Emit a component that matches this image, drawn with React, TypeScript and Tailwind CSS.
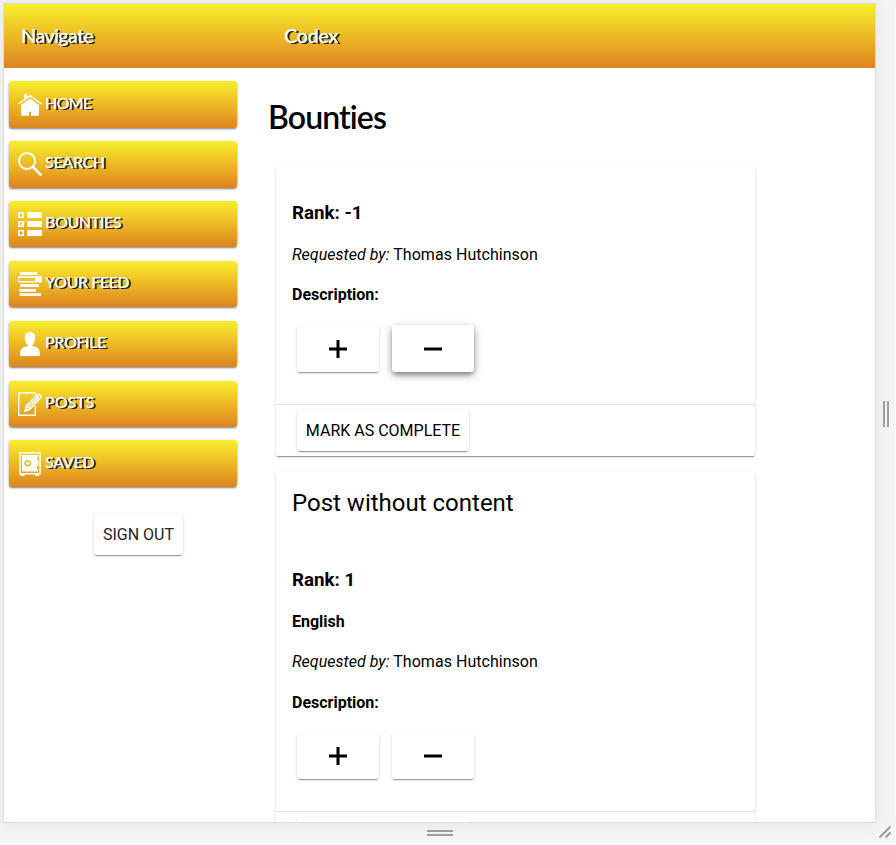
import React from "react";

const Home = () => (
  <svg width="24" height="24" viewBox="0 -1.7 24 24" fill="#fff">
    <path d="M6 .3h3v3L6 5.500z" />
    <path d="M0 9.700 12 1l12 8.700-.9 1.200L12 3 .9 10.900z" />
    <path d="M3 11.300 12 4.800l9 6.500V22h-8v-4h-2v4H3z" />
  </svg>
);
const Search = () => (
  <svg width="24" height="24" viewBox="0 0 24 24" fill="none" stroke="#fff">
    <circle cx="9" cy="9" r="8" strokeWidth="2" />
    <path d="m15 15 7.7 7.7" strokeWidth="2.6" strokeLinecap="round" />
  </svg>
);
const List = () => (
  <svg width="24" height="24" viewBox="0 0 24 24" fill="#fff">
    <path d="M9 0h15v6H9zM9 9h15v6H9zM9 18h15v6H9z" />
    <path d="M.75.75h4.5v4.5H.75zM.75 10h4.5v4.25H.75zM.75 18.75h4.5v4.5H.75z" fill="none" stroke="#fff" strokeWidth="1.5" />
    <path d="m2 11.5 1.5 1.5L7.5 8.5" fill="none" stroke="#fff" />
  </svg>
);
const Feed = () => (
  <svg width="24" height="24" viewBox="0 0 24 24" fill="#fff">
    <path d="M2 0h17.5v3H2zM2 12h19v3H2zM1 17h17v2.7H1zM1.5 21.2H23V24H1.5z" />
    <path fillRule="evenodd" d="M0 4.3h24v6.2H0zM1 6v3h16V6z" />
  </svg>
);
const Profile = () => (
  <svg width="24" height="24" viewBox="0 0 24 24" fill="#fff">
    <path d="M12 0c-3.5 0-5.3 2.2-5.3 5.6 0 2.8 1 5.8 2.8 7.3.3 1-.4 1.5-1.8 1.8C4.300 15.300 2 16.200 2 24h20c0-7.800-2.300-8.700-5.700-9.300-1.400-.3-2.100-.8-1.800-1.800 1.800-1.500 2.800-4.500 2.800-7.300C17.300 2.200 15.500 0 12 0z" />
  </svg>
);
const Posts = () => (
  <svg width="24" height="24" viewBox="0 0 24 24" fill="none" stroke="#fff">
    <path d="M17.300 3V.7H.7v22.600h16.600V14" strokeWidth="1.400" />
    <path d="m7.200 18.800 1.300-5L19.500 2.900q1-1 2.200.1l.8.800q1 1.100 0 2.200L11.700 17.200z" strokeWidth="1.700" />
    <path d="m9 14 3 3M18.500 4l3 3M11 14.500l8.500-8.500" strokeWidth="1.700" />
    <path d="m7 19 1-3.500L10.500 18z" fill="#fff" stroke="none" />
  </svg>
);
const Safe = () => (
  <svg width="24" height="24" viewBox="0 0 24 24" fill="#fff">
    <path fillRule="evenodd" d="M1.200 0h21.600v22.500H21V24h-3.500v-1.500h-11V24H2.500v-1.500H1.200zM2.700 1.500V21h18.600V1.500z" />
    <path fillRule="evenodd" d="M4 3h16v2h-1v3h1.500v6H19v3h1v2.500H4zM9.700 8a3.200 3.200 0 1 0 0 6.400 3.200 3.200 0 0 0 0-6.400z" />
    <circle cx="9.700" cy="11.200" r="1.700" />
  </svg>
);

const items = [
  { label: "HOME", Icon: Home, cls: "pb-[3px] tracking-[-0.8px]" },
  { label: "SEARCH", Icon: Search, cls: "pb-[4px] tracking-[-0.35px]" },
  { label: "BOUNTIES", Icon: List, cls: "pb-[4px] tracking-[-0.45px]" },
  { label: "YOUR FEED", Icon: Feed, cls: "pb-[4px] tracking-[-0.45px]" },
  { label: "PROFILE", Icon: Profile, cls: "pb-[3px] tracking-[-0.45px]" },
  { label: "POSTS", Icon: Posts, cls: "pb-[3px] tracking-[-0.1px]" },
  { label: "SAVED", Icon: Safe, cls: "pb-[3px] tracking-[-0.4px]" },
];

const raised = "rounded-[3px] bg-white shadow-[0_1px_3px_rgba(0,0,0,0.2),0_2px_1px_-1px_rgba(0,0,0,0.3)]";

function VoteButtons({ active, height }: { active?: boolean; height: string }) {
  return (
    <div className="ml-[5px] flex gap-[13px]">
      <button className={`flex w-[82px] items-center justify-center ${height} ${raised}`}>
        <svg width="18" height="18" viewBox="0 0 18 18"><path d="M9 0v18M0 9h18" stroke="#000" strokeWidth="3" /></svg>
      </button>
      <button
        className={`flex w-[82px] items-center justify-center rounded-[3px] bg-white ${height} ${
          active
            ? "shadow-[0_3px_5px_-1px_rgba(0,0,0,0.35),0_3px_10px_rgba(0,0,0,0.32)]"
            : "shadow-[0_1px_3px_rgba(0,0,0,0.2),0_2px_1px_-1px_rgba(0,0,0,0.3)]"
        }`}
      >
        <svg width="18" height="18" viewBox="0 0 18 18"><path d="M0 9h18" stroke="#000" strokeWidth="3" /></svg>
      </button>
    </div>
  );
}

function Requested() {
  return (
    <p className="h-5 text-[16px] leading-5 tracking-[0.03px] whitespace-nowrap">
      <i>Requested by:</i> Thomas Hutchinson
    </p>
  );
}

function Complete() {
  return (
    <div className="h-[52px] border-t border-[#e2e2e2] pt-[5px] pl-[21px]">
      <button className={`h-[41px] w-[172px] text-[16px] whitespace-nowrap ${raised}`}>MARK AS COMPLETE</button>
    </div>
  );
}

const card = "w-[479px] rounded-[2px] bg-white shadow-[0_1px_3px_rgba(0,0,0,0.18),0_2px_1px_-1px_rgba(0,0,0,0.35)]";

export default function App() {
  return (
    <div className="flex h-[845px] w-[896px] flex-col overflow-hidden bg-[#f9f9f9] font-['Roboto',sans-serif] text-black">
      <div className="flex h-[842px] w-[895px] flex-col bg-[#f4f4f4] pt-[3px] pl-[3px]">
        <div className="flex">
          <div className="flex h-[820px] w-[873px] shrink-0 flex-col overflow-hidden border border-[#dcdcdc] bg-white shadow-[0_0_16px_rgba(0,0,0,0.07)]">
            <header className="flex h-16 shrink-0 items-center bg-linear-to-b from-[#f7ef2b] to-[#dc831f] pb-[2px] pl-[17px] font-['Lato',sans-serif] text-[20px] font-semibold text-white [text-shadow:2px_1px_0.5px_#222]">
              <span className="w-[263px] tracking-[-0.8px]">Navigate</span>
              <span className="tracking-[-0.5px]">Codex</span>
            </header>
            <div className="flex min-h-0 flex-1">
              <nav className="flex w-[264px] shrink-0 flex-col gap-[13.46px] pt-[13.3px] pl-[5px]">
                {items.map(({ label, Icon, cls }) => (
                  <a
                    key={label}
                    className="flex h-[46.4px] w-[228px] shrink-0 items-center rounded-[3px] bg-linear-to-b from-[#f7ef2b] to-[#dc831f] pl-[9px] shadow-[0_1px_3px_rgba(0,0,0,0.35),0_1px_1px_rgba(0,0,0,0.2)]"
                  >
                    <Icon />
                    <span className={`ml-[3px] font-['Lato',sans-serif] text-[16px] font-semibold text-white [text-shadow:2px_1px_0.5px_#222] ${cls}`}>
                      {label}
                    </span>
                  </a>
                ))}
                <button className={`mt-[13.500px] ml-[85px] h-[41px] w-[89px] shrink-0 pt-px text-[16px] text-[#222] ${raised}`}>SIGN OUT</button>
              </nav>
              <main className="min-w-0 flex-1">
                <h1 className="mt-[29px] h-10 font-['Lato',sans-serif] text-[32px] leading-10 font-semibold tracking-[-0.9px]">Bounties</h1>
                <div className="mt-[29px] ml-2 flex flex-col gap-[16px]">
                  <section className={`h-[290px] pt-[37px] ${card}`}>
                    <div className="h-[201px] px-4">
                      <h3 className="h-5 text-[18.72px] leading-5 font-bold">Rank: -1</h3>
                      <div className="mt-[22px]"><Requested /></div>
                      <p className="mt-5 mb-5 h-5 text-[16px] leading-5 font-bold">Description:</p>
                      <VoteButtons active height="h-[47px]" />
                    </div>
                    <Complete />
                  </section>
                  <section className={`h-[392px] pt-[15px] ${card}`}>
                    <div className="h-[324px] px-4">
                      <h2 className="h-8 text-[24px] leading-8">Post without content</h2>
                      <h3 className="mt-[51px] h-5 text-[18.72px] leading-5 font-bold">Rank: 1</h3>
                      <p className="mt-[22px] mb-5 h-5 text-[16px] leading-5 font-bold">English</p>
                      <Requested />
                      <p className="mt-[21px] mb-5 h-5 text-[16px] leading-5 font-bold">Description:</p>
                      <VoteButtons height="h-[46px]" />
                    </div>
                    <Complete />
                  </section>
                </div>
              </main>
            </div>
          </div>
          <div className="flex flex-1 items-center justify-center gap-[2px] pt-[2px]">
            <span className="h-[26px] w-[2px] bg-[#9e9e9e]" />
            <span className="h-[26px] w-[2px] bg-[#9e9e9e]" />
          </div>
        </div>
        <div className="flex h-[19px] items-center">
          <div className="flex w-[873px] flex-col items-center gap-[2px]">
            <span className="h-[2px] w-[26px] bg-[#9e9e9e]" />
            <span className="h-[2px] w-[26px] bg-[#9e9e9e]" />
          </div>
          <svg width="14" height="14" viewBox="0 0 14 14" className="ml-[2px] -mt-[2px]">
            <path d="m1.500 12.500 11-11M7.500 12.500l5-5" stroke="#999" strokeWidth="1.800" />
          </svg>
        </div>
      </div>
    </div>
  );
}
